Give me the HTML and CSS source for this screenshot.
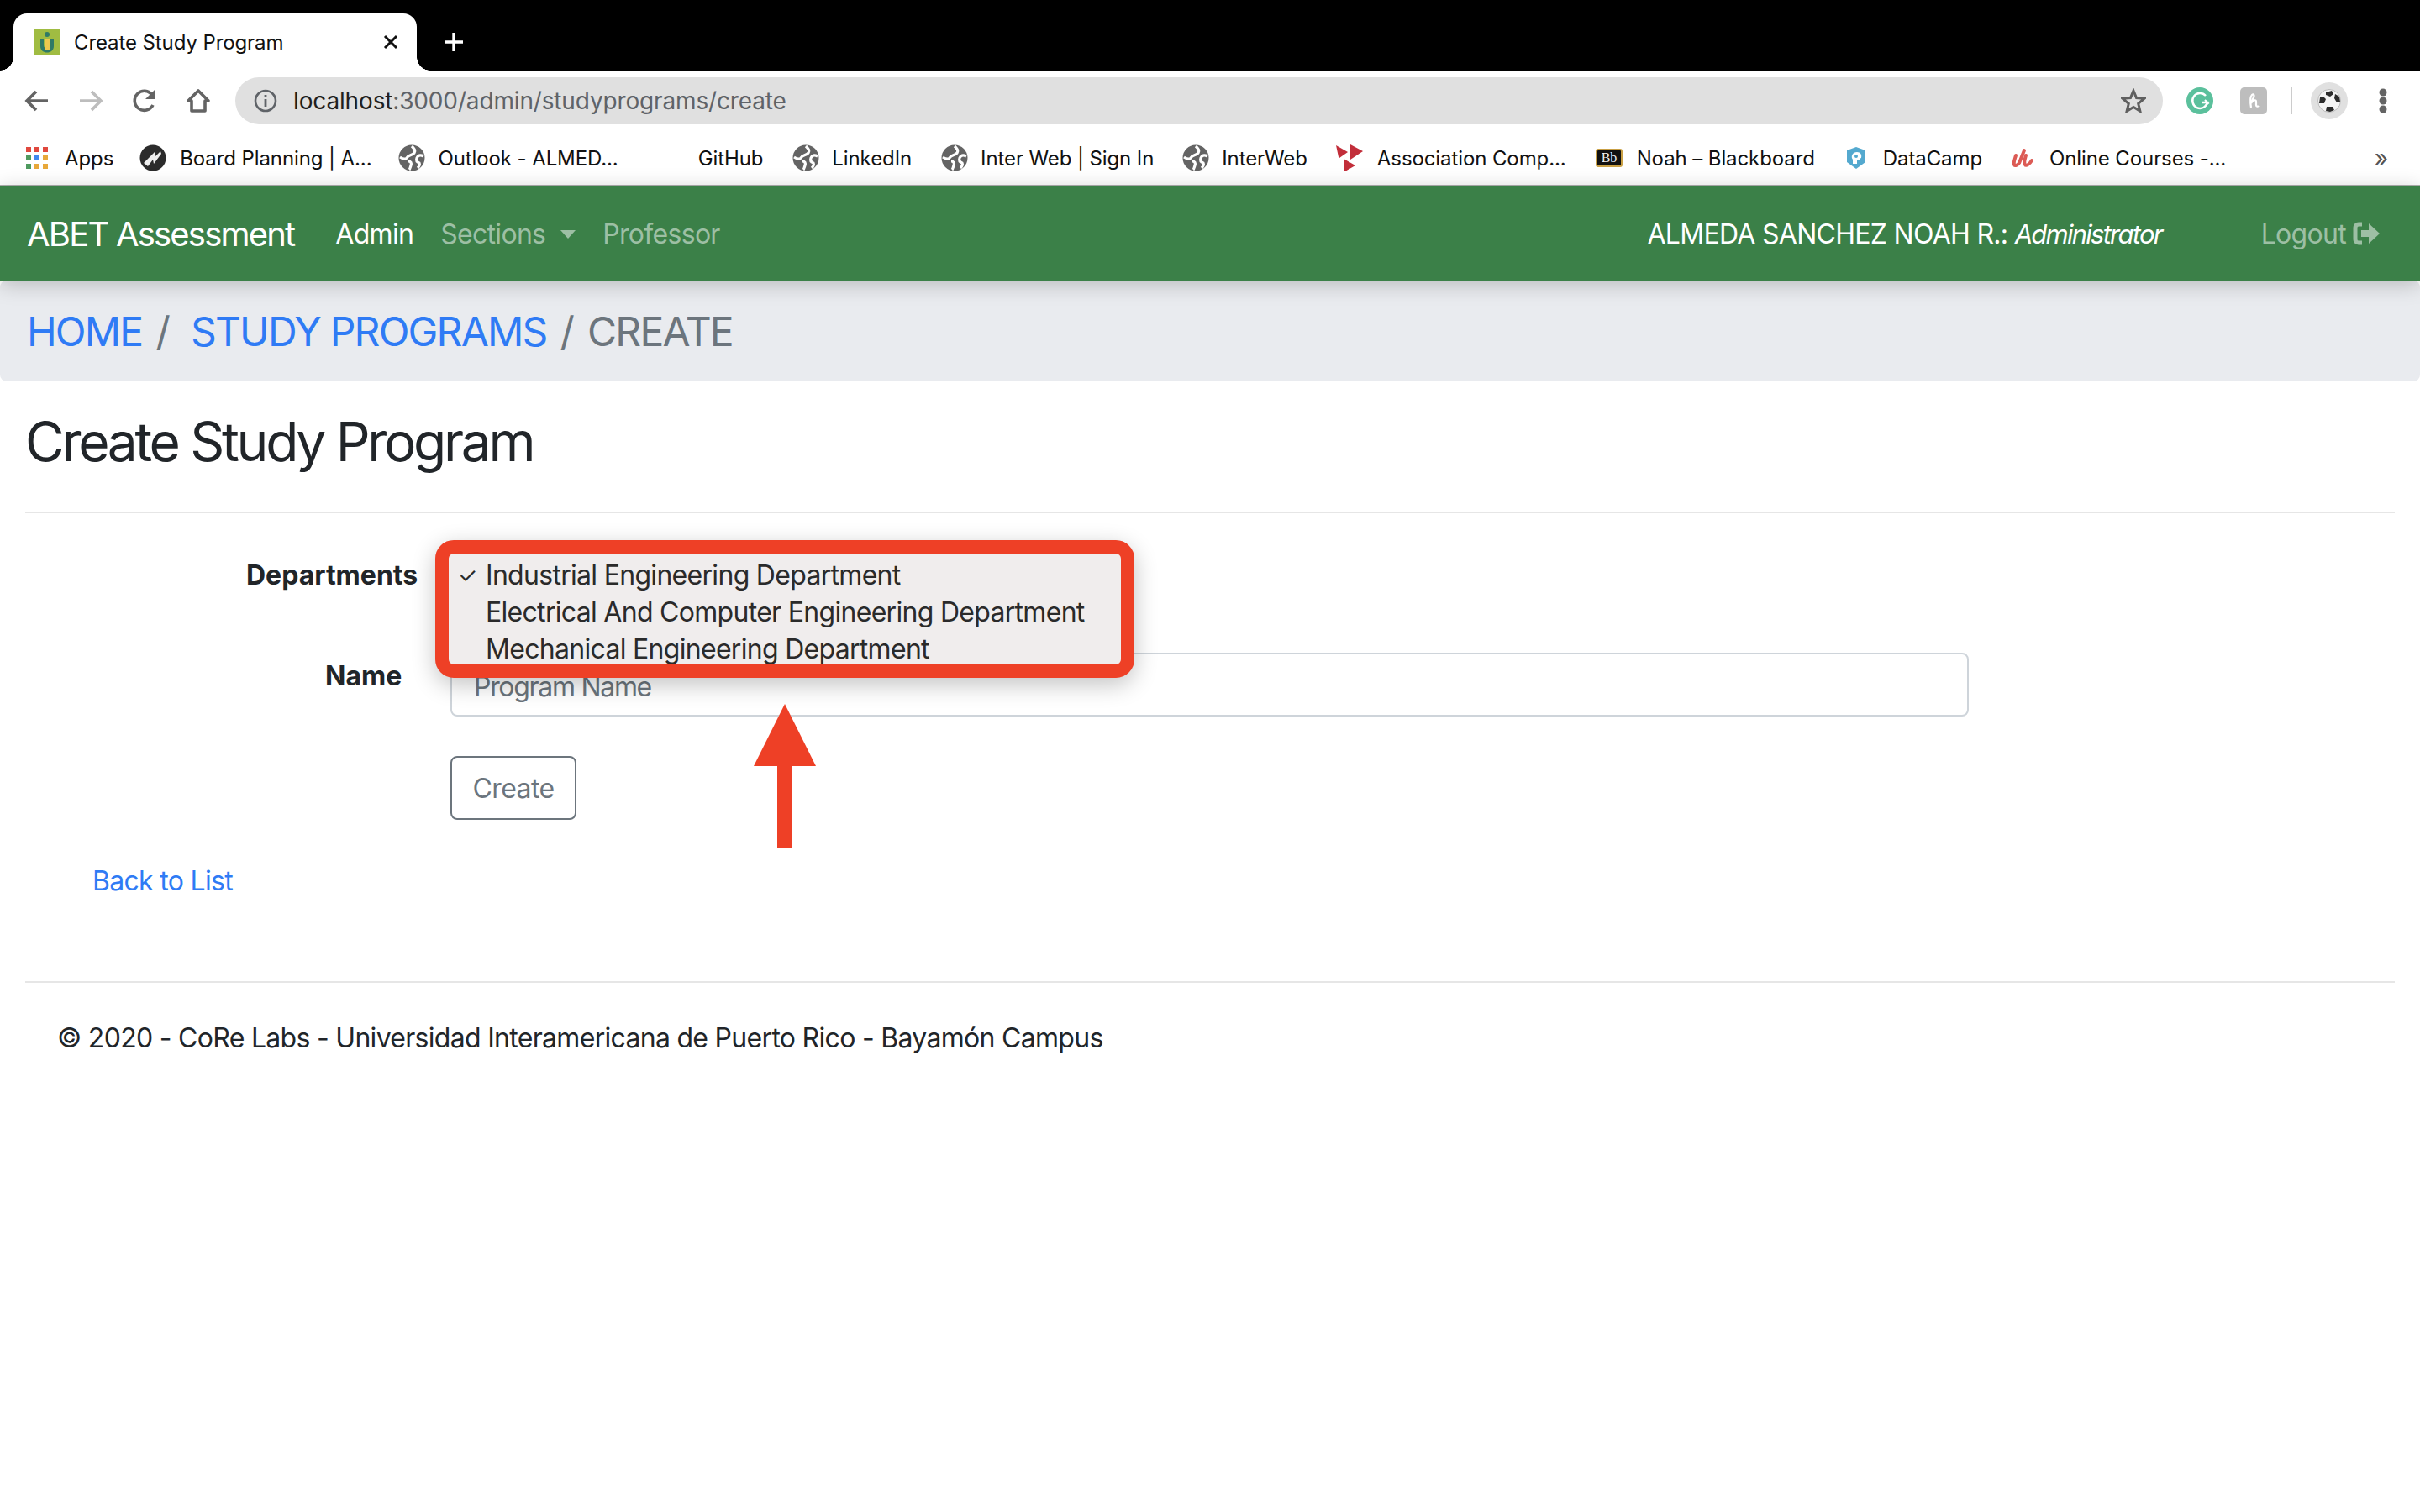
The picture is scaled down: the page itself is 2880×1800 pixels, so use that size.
FILE: index.html
```html
<!DOCTYPE html>
<html lang="en">

<head>
    <meta charset="UTF-8">
    <title>Create Study Program</title>
    <link rel="stylesheet" href="styles.css">
</head>

<body>
    <svg class="defs" width="0" height="0">
        <symbol id="globe" viewBox="0 0 32 32">
            <circle cx="16" cy="16" r="15.500" fill="#646464" />
            <path d="M16 2c3 3 5 5 3 8s-7 2-9 6c-1 2-5 1-8-1M30 14c-4-2-7-1-8 2s0 5 3 6c1 2 0 4-2 6M12 20c3 0 4 2 3 5s-1 4-2 5" fill="none" stroke="#fff" stroke-width="3.200" />
        </symbol>
    </svg>

    <!-- browser chrome -->
    <div class="tabstrip">
        <div class="tab">
            <svg class="favicon" viewBox="0 0 32 32">
                <rect width="32" height="32" fill="#a0bc42" />
                <path d="M8 13h4v7c0 5 8 5 8 0v-7h4v8c0 10-16 10-16 0z" fill="#2f7a66" />
                <rect x="13" y="12" width="6" height="13" fill="#ecc94f" />
                <circle cx="16" cy="7" r="3" fill="#2f7a66" />
            </svg>
            <span class="tab-title">Create Study Program</span>
            <svg class="tab-close" viewBox="0 0 18 18"><path d="M2 2l14 14M16 2L2 16" stroke="#111" stroke-width="3" /></svg>
        </div>
        <svg class="tab-new" viewBox="0 0 24 24"><path d="M12 1v22M1 12h22" stroke="#fff" stroke-width="3.400" /></svg>
    </div>

    <div class="toolbar">
        <svg class="tool" viewBox="0 0 32 32"><path d="M29 16H4M15 5L4 16l11 11" fill="none" stroke="#646464" stroke-width="3.600" /></svg>
        <svg class="tool" viewBox="0 0 32 32"><path d="M3 16h25M17 5l11 11-11 11" fill="none" stroke="#bdbdbd" stroke-width="3.600" /></svg>
        <svg class="tool" viewBox="0 0 32 32"><path d="M26 21a11.500 11.500 0 1 1-1-12" fill="none" stroke="#646464" stroke-width="3.600" /><path d="M28 3v11H17z" fill="#646464" /></svg>
        <svg class="tool" viewBox="0 0 32 32"><path d="M16 4L4 16h4v12h16V16h4z" fill="none" stroke="#646464" stroke-width="3.600" stroke-linejoin="round" /></svg>
        <div class="omnibox">
            <svg class="info" viewBox="0 0 28 28">
                <circle cx="14" cy="14" r="12" fill="none" stroke="#5f6368" stroke-width="2.600" />
                <path d="M14 12v9M14 7v3" stroke="#5f6368" stroke-width="2.800" />
            </svg>
            <span class="url"><span class="url-host">localhost</span>:3000/admin/studyprograms/create</span>
            <svg class="star" viewBox="0 0 30 30"><path d="M15 3l3.500 8.600 9.300.7-7.100 6 2.200 9-7.900-4.900-7.900 4.900 2.200-9-7.100-6 9.300-.7z" fill="none" stroke="#5f5f5f" stroke-width="3" /></svg>
        </div>
        <svg class="ext ext-grammarly" viewBox="0 0 32 32">
            <circle cx="16" cy="16" r="16" fill="#5bc09c" />
            <path d="M23 10a9 9 0 1 0 2 8h-7" fill="none" stroke="#fff" stroke-width="2.400" />
            <path d="M22 15l4 4-4 3" fill="none" stroke="#fff" stroke-width="2" />
        </svg>
        <svg class="ext ext-honey" viewBox="0 0 32 32">
            <rect width="32" height="32" rx="5" fill="#bdbdbd" />
            <path d="M13 24c-1-6-1-13 1-15 2-2 4 1 1 5l-2 5c2-4 6-5 6-2v4c0 2 2 2 3 1" fill="none" stroke="#fff" stroke-width="2.200" />
        </svg>
        <div class="tool-sep"></div>
        <div class="avatar">
            <svg viewBox="0 0 28 28">
                <circle cx="14" cy="14" r="13.500" fill="#f4f4f4" stroke="#bbb" />
                <path d="M10 4l7-2 2 4-4 3-5-2zM21 6l5 3 1 6-4 1-3-5zM3 10L7 9l3 3-2 5-6 0zM11 21h7l2 4-5 2-5-1z" fill="#2c2c2c" />
            </svg>
        </div>
        <svg class="menu-dots" viewBox="0 0 10 30">
            <circle cx="5" cy="5" r="4.500" fill="#646464" />
            <circle cx="5" cy="15" r="4.500" fill="#646464" />
            <circle cx="5" cy="25" r="4.500" fill="#646464" />
        </svg>
    </div>

    <div class="bookmarks">
        <div class="bm bm-apps">
            <svg class="bm-icon" viewBox="0 0 26 26">
                <rect width="6" height="6" fill="#e0483e" /><rect x="10" width="6" height="6" fill="#e0483e" /><rect x="20" width="6" height="6" fill="#e0483e" />
                <rect y="10" width="6" height="6" fill="#4f9a5f" /><rect x="10" y="10" width="6" height="6" fill="#3f88ee" /><rect x="20" y="10" width="6" height="6" fill="#e8a83a" />
                <rect y="20" width="6" height="6" fill="#4f9a5f" /><rect x="10" y="20" width="6" height="6" fill="#e8a83a" /><rect x="20" y="20" width="6" height="6" fill="#e8a83a" />
            </svg>
            <span>Apps</span>
        </div>
        <div class="bm bm-board">
            <svg class="bm-icon" viewBox="0 0 32 32">
                <circle cx="16" cy="16" r="15.500" fill="#2b2b2b" />
                <path d="M5 22L18 9l1 5 6-6 1 3-9 12-1-5-6 8z" fill="#eee" />
            </svg>
            <span>Board Planning | A...</span>
        </div>
        <div class="bm bm-outlook"><svg class="bm-icon"><use href="#globe" /></svg><span>Outlook - ALMED...</span></div>
        <div class="bm bm-github"><span>GitHub</span></div>
        <div class="bm bm-linkedin"><svg class="bm-icon"><use href="#globe" /></svg><span>LinkedIn</span></div>
        <div class="bm bm-signin"><svg class="bm-icon"><use href="#globe" /></svg><span>Inter Web | Sign In</span></div>
        <div class="bm bm-interweb"><svg class="bm-icon"><use href="#globe" /></svg><span>InterWeb</span></div>
        <div class="bm bm-assoc">
            <svg class="bm-icon" viewBox="0 0 32 32">
                <path d="M0 1l14 8-10 7-1-1zM17 0l15 8-15 10zM9 17l14 8-14 8z" fill="#c22e3a" />
            </svg>
            <span>Association Comp...</span>
        </div>
        <div class="bm bm-noah">
            <svg class="bm-icon bm-bb" viewBox="0 0 32 22">
                <rect x="1" y="1" width="30" height="20" rx="2" fill="#111" stroke="#c9a045" stroke-width="2" />
                <text x="16" y="16" text-anchor="middle" class="bb-text">Bb</text>
            </svg>
            <span>Noah – Blackboard</span>
        </div>
        <div class="bm bm-datacamp">
            <svg class="bm-icon bm-dc" viewBox="0 0 24 26">
                <path d="M12 0l11 4v14l-11 8-11-8V4z" fill="#54a9cf" />
                <path d="M8 20v-5c-3-4 0-9 5-9 4 0 6 3 5 7l-2 1v2h-3v4z" fill="#fff" />
                <circle cx="12" cy="11" r="2" fill="#54a9cf" />
            </svg>
            <span>DataCamp</span>
        </div>
        <div class="bm bm-udemy">
            <svg class="bm-icon bm-ud" viewBox="0 0 28 24">
                <path d="M6 9C5 13 3 17 4 20c1 2 4 1 6-2l6-15M18 9c-1 4-3 8-1 11 1 2 5 0 8-5" fill="none" stroke="#dc5b55" stroke-width="4" stroke-linecap="round" />
            </svg>
            <span>Online Courses -...</span>
        </div>
        <span class="bm-more">»</span>
    </div>

    <!-- page -->
    <nav class="navbar">
        <a class="brand">ABET Assessment</a>
        <a class="nav-link active">Admin</a>
        <a class="nav-link nav-sections">Sections<i class="caret"></i></a>
        <a class="nav-link">Professor</a>
        <span class="nav-user">ALMEDA SANCHEZ NOAH R.: <em>Administrator</em></span>
        <a class="nav-link nav-logout">Logout
            <svg class="logout-icon" viewBox="0 0 32 28">
                <path d="M11 3H7C4 3 3 5 3 7v14c0 2 1 4 4 4h4" fill="none" stroke="#9dbfa4" stroke-width="5" />
                <path d="M10 10h9V2l13 12-13 12v-8h-9z" fill="#9dbfa4" />
            </svg>
        </a>
    </nav>

    <ol class="breadcrumb">
        <li><a>HOME</a></li>
        <li class="crumb-sep">/</li>
        <li><a>STUDY PROGRAMS</a></li>
        <li class="crumb-sep crumb-sep-last">/</li>
        <li class="crumb-current">CREATE</li>
    </ol>

    <main class="container">
        <h2 class="page-title">Create Study Program</h2>
        <hr>
        <form class="form">
            <div class="form-row form-row-dept">
                <label class="form-label label-dept">Departments</label>
            </div>
            <div class="form-row form-row-name">
                <label class="form-label label-name">Name</label>
                <input class="form-control" type="text" placeholder="Program Name">
            </div>
            <button class="btn-create" type="button">Create</button>

            <!-- open select menu with the red annotation round it -->
            <div class="select-menu">
                <div class="option"><span class="check">✓</span>Industrial Engineering Department</div>
                <div class="option">Electrical And Computer Engineering Department</div>
                <div class="option">Mechanical Engineering Department</div>
            </div>
            <svg class="arrow" viewBox="0 0 74 172">
                <path d="M37 0L74 74H46V172H28V74H0z" fill="#ee4026" />
            </svg>
        </form>
        <a class="back-link">Back to List</a>
        <hr class="footer-rule">
        <footer class="footer">© 2020 - CoRe Labs - Universidad Interamericana de Puerto Rico - Bayamón Campus</footer>
    </main>
</body>

</html>
```

FILE: styles.css
```css
* {
    margin: 0;
    padding: 0;
    box-sizing: border-box;
}

body {
    background-color: #fff;
    color: #212529;
    font-family: Inter, "Liberation Sans", sans-serif;
    font-size: 32px;
    letter-spacing: -0.7px;
    overflow: hidden;
}

.defs {
    position: absolute;
}

/* tab strip */
.tabstrip {
    height: 84px;
    background-color: #000;
    display: flex;
    align-items: flex-start;
}

.tab {
    position: relative;
    margin-top: 16px;
    margin-left: 16px;
    width: 480px;
    height: 68px;
    background-color: #fff;
    border-radius: 16px 16px 0 0;
    display: flex;
    align-items: center;
    padding-left: 24px;
}

.tab::before,
.tab::after {
    content: "";
    position: absolute;
    bottom: 0;
    width: 16px;
    height: 16px;
}

.tab::before {
    left: -16px;
    background: radial-gradient(circle at 0 0, #000 15.500px, #fff 16px);
}

.tab::after {
    right: -16px;
    background: radial-gradient(circle at 100% 0, #000 15.500px, #fff 16px);
}

.favicon {
    width: 32px;
    height: 32px;
}

.tab-title {
    margin-left: 16px;
    font-size: 24px;
    letter-spacing: -0.1px;
    color: #111;
    white-space: nowrap;
}

.tab-close {
    width: 18px;
    height: 18px;
    margin-left: auto;
    margin-right: 22px;
}

.tab-new {
    width: 24px;
    height: 24px;
    margin-left: 32px;
    margin-top: 38px;
}

/* toolbar */
.toolbar {
    height: 76px;
    display: flex;
    align-items: center;
    padding-left: 28px;
    padding-bottom: 4px;
}

.tool {
    width: 32px;
    height: 32px;
    margin-right: 32px;
}

.omnibox {
    width: 2294px;
    height: 56px;
    margin-left: -4px;
    border-radius: 28px;
    background-color: #e0e0e0;
    display: flex;
    align-items: center;
    padding-left: 22px;
    padding-right: 20px;
}

.info {
    width: 28px;
    height: 28px;
}

.url {
    margin-left: 19px;
    font-size: 28px;
    letter-spacing: -0.15px;
    color: #5f6368;
}

.url-host {
    color: #1f1f1f;
}

.star {
    width: 30px;
    height: 30px;
    margin-left: auto;
}

.ext {
    width: 32px;
    height: 32px;
}

.ext-grammarly {
    margin-left: 28px;
}

.ext-honey {
    margin-left: 32px;
}

.tool-sep {
    width: 2px;
    height: 32px;
    margin-left: 28px;
    background-color: #ccc;
}

.avatar {
    width: 44px;
    height: 44px;
    margin-left: 22px;
    border-radius: 50%;
    background-color: #e0e0e0;
    display: flex;
    align-items: center;
    justify-content: center;
}

.avatar svg {
    width: 28px;
    height: 28px;
}

.menu-dots {
    width: 10px;
    height: 30px;
    margin-left: 37px;
}

/* bookmarks */
.bookmarks {
    height: 62px;
    border-bottom: 2px solid #b0b0b0;
    display: flex;
    align-items: center;
    padding-left: 31px;
    padding-bottom: 4px;
    font-size: 24px;
    letter-spacing: -0.1px;
    color: #111;
    white-space: nowrap;
}

.bm {
    display: flex;
    align-items: center;
    gap: 15px;
}

.bm-icon {
    width: 32px;
    height: 32px;
}

.bm-apps .bm-icon {
    width: 26px;
    height: 26px;
}

.bm-apps {
    gap: 20px;
}

.bm-board {
    margin-left: 31px;
    gap: 16px;
}

.bm-outlook {
    margin-left: 32px;
}

.bm-github {
    margin-left: 95px;
}

.bm-linkedin {
    margin-left: 35px;
}

.bm-signin {
    margin-left: 35px;
}

.bm-interweb {
    margin-left: 34px;
}

.bm-assoc {
    margin-left: 34px;
    gap: 17px;
}

.bm-noah {
    margin-left: 35px;
    gap: 17px;
}

.bm-datacamp {
    margin-left: 37px;
    gap: 20px;
}

.bm-udemy {
    margin-left: 34px;
    gap: 18px;
}

.bm-dc {
    width: 24px;
    height: 26px;
}

.bm-ud {
    width: 28px;
    height: 24px;
}

.bb-text {
    font-family: "Liberation Serif", serif;
    font-size: 16px;
    fill: #eee;
}

.bm-more {
    margin-left: auto;
    margin-right: 38px;
    color: #555;
    font-size: 28px;
}

/* navbar */
.navbar {
    position: relative;
    height: 112px;
    background-color: #3b8048;
    box-shadow: 0 4px 24px rgba(0, 0, 0, 0.22);
    display: flex;
    align-items: center;
    padding-left: 32px;
    color: #9dbfa4;
    white-space: nowrap;
}

.brand {
    font-size: 40px;
    letter-spacing: -1.8px;
    color: #fff;
    margin-right: 49px;
}

.nav-link {
    margin-right: 32px;
}

.active {
    color: #fff;
}

.caret {
    display: inline-block;
    margin-left: 18px;
    margin-bottom: 6px;
    border-top: 10px solid #9dbfa4;
    border-left: 9px solid transparent;
    border-right: 9px solid transparent;
}

.nav-user {
    margin-left: auto;
    margin-right: 118px;
    color: #fff;
}

.nav-user em {
    font-size: 31px;
    letter-spacing: -1.75px;
}

.nav-logout {
    margin-right: 48px;
    display: flex;
    align-items: center;
    gap: 8px;
}

.logout-icon {
    width: 32px;
    height: 28px;
}

/* breadcrumb */
.breadcrumb {
    height: 120px;
    background-color: #e9ebef;
    border-radius: 8px;
    display: flex;
    align-items: center;
    padding-left: 32px;
    list-style: none;
    font-size: 48px;
    letter-spacing: -1.8px;
    white-space: nowrap;
}

.breadcrumb a {
    color: #2f7bf5;
}

.crumb-sep {
    color: #6c757d;
    margin: 0 26px 0 16px;
}

.crumb-sep-last {
    margin-right: 17px;
}

.crumb-current {
    color: #6c757d;
}

/* content */
.container {
    padding: 0 30px;
}

.page-title {
    font-size: 64px;
    font-weight: 400;
    letter-spacing: -3.3px;
    line-height: 77px;
    padding-top: 33px;
    padding-bottom: 45px;
}

hr {
    border: 0;
    border-top: 2px solid #e6e6e6;
}

.form {
    position: relative;
    padding-top: 44px;
}

.form-row {
    display: flex;
    align-items: flex-start;
}

.form-row-dept {
    height: 122px;
}

.form-label {
    font-weight: 700;
    letter-spacing: 0;
    white-space: nowrap;
}

.label-dept {
    margin-left: 263px;
    margin-top: 10px;
}

.label-name {
    margin-left: 357px;
    margin-top: 8px;
    width: 149px;
}

.form-control {
    width: 1807px;
    height: 76px;
    border: 2px solid #ced4da;
    border-radius: 8px;
    padding: 0 26px;
    padding-top: 4px;
    font-family: inherit;
    font-size: 32px;
    letter-spacing: -1.3px;
    color: #495057;
    background-color: #fff;
    outline: none;
}

.form-control::placeholder {
    color: #6c757d;
    opacity: 1;
}

.btn-create {
    display: block;
    margin-top: 47px;
    margin-left: 506px;
    width: 150px;
    height: 76px;
    border: 2px solid #6c757d;
    border-radius: 8px;
    background-color: #fff;
    color: #6c757d;
    font-family: inherit;
    font-size: 32px;
    letter-spacing: -0.6px;
}

.select-menu {
    position: absolute;
    left: 488px;
    top: 32px;
    width: 832px;
    height: 164px;
    border: 16px solid #ee4026;
    border-radius: 22px;
    background-color: #f0eded;
    box-shadow: 0 8px 28px rgba(0, 0, 0, 0.24);
    padding-top: 4px;
    padding-left: 44px;
    font-size: 32px;
    line-height: 44px;
    color: #2a2a2a;
    white-space: nowrap;
    overflow: hidden;
}

.option {
    position: relative;
}

.check {
    position: absolute;
    left: -33px;
    font-size: 26px;
}

.arrow {
    position: absolute;
    left: 867px;
    top: 227px;
    width: 74px;
    height: 172px;
}

.back-link {
    display: block;
    margin-left: 80px;
    margin-top: 54px;
    color: #2f7bf5;
    line-height: 38px;
}

.footer-rule {
    margin-top: 100px;
}

.footer {
    margin-left: 38px;
    margin-top: 46px;
    letter-spacing: -0.7px;
    line-height: 40px;
}
```
